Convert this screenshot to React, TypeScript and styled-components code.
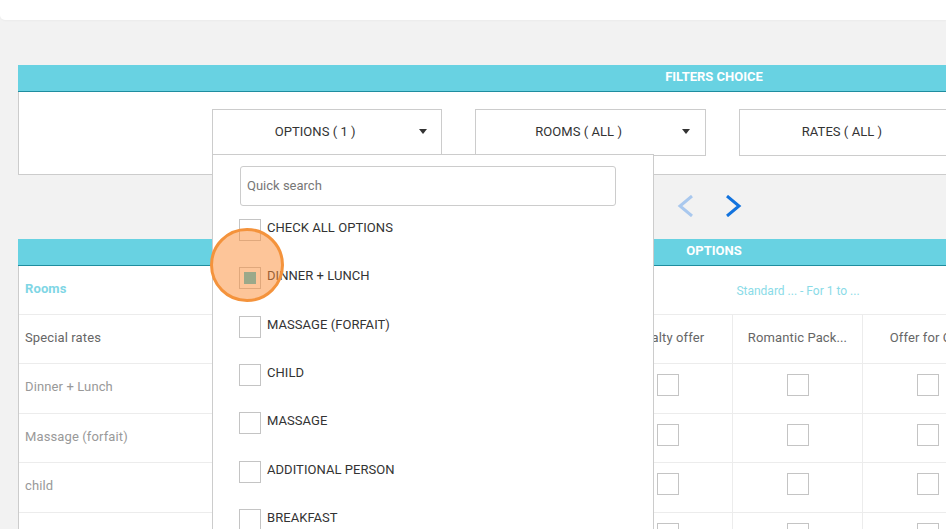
import React from 'react';
import styled, { createGlobalStyle } from 'styled-components';

const GlobalStyle = createGlobalStyle`
    html, body {
        margin: 0;
        height: 100%;
        overflow: hidden;
        background-color: #f2f2f2;
    }
    * {
        box-sizing: border-box;
    }
`;

const Page = styled.div`
    position: relative;
    width: 946px;
    height: 529px;
    overflow: hidden;
    background-color: #f2f2f2;
    font-family: Roboto, 'Liberation Sans', sans-serif;
    font-size: 13px;
    letter-spacing: 0.05px;
    color: #333;
`;

const TopBar = styled.div`
    height: 20px;
    background-color: #fff;
    border-bottom-left-radius: 5px;
    box-shadow: 0 1px 2px rgba(0, 0, 0, 0.03);
`;

const Content = styled.div`
    width: 1410px;
    padding: 45px 0 0 18px;
`;

const Panel = styled.section`
    background-color: #fff;
    border: 1px solid #ccc;
    border-top: 0;
`;

const PanelTitle = styled.div`
    height: 27px;
    margin: 0 -1px;
    line-height: 24px;
    text-align: center;
    font-size: 13px;
    font-weight: 700;
    letter-spacing: 0;
    color: #fff;
    background-color: #68d2e2;
    border-bottom: 1px solid #1f8d9f;
`;

const FilterRow = styled.div`
    display: flex;
    gap: 33px;
    height: 82px;
    padding: 17px 0 0 193px;
`;

const Dropdown = styled.div`
    position: relative;
    width: 230.4px;
    height: 47px;
`;

const DropdownButton = styled.div`
    display: flex;
    align-items: center;
    justify-content: center;
    height: 100%;
    padding: 0 24px 2px 0;
    background-color: #fff;
    border: 1px solid #ccc;
    color: #333;
`;

const Caret = styled.span`
    position: absolute;
    top: 20px;
    right: 15.5px;
    border-top: 5px solid #333;
    border-left: 4.5px solid transparent;
    border-right: 4.5px solid transparent;
`;

const Menu = styled.div`
    position: absolute;
    top: 45px;
    left: 0;
    z-index: 2;
    width: 442px;
    height: 400px;
    padding: 11px 0 0 26px;
    background-color: #fff;
    border: 1px solid #ccc;
`;

const Search = styled.input`
    display: block;
    width: 376px;
    height: 40px;
    margin: 0 0 13px 1px;
    padding: 0 6px 2px;
    border: 1px solid #ccc;
    border-radius: 3px;
    outline: none;
    font-family: inherit;
    font-size: 13px;
    &::placeholder {
        color: #777;
        opacity: 1;
    }
`;

const MenuRow = styled.div`
    display: flex;
    gap: 6px;
    height: 48.33px;
    line-height: 17px;
    color: #333;
`;

const Check = styled.span<{ $checked?: boolean }>`
    display: flex;
    align-items: center;
    justify-content: center;
    flex: none;
    width: 22px;
    height: 22px;
    background-color: #fff;
    border: 1px solid #c4c4c4;
    &::after {
        content: '';
        display: ${(props) => (props.$checked ? 'block' : 'none')};
        width: 12px;
        height: 12px;
        background-color: #3bc6e1;
    }
`;

const Pager = styled.div`
    display: flex;
    align-items: center;
    justify-content: center;
    gap: 31px;
    height: 64px;
    padding: 0 9px 2px 0;
`;

const Grid = styled.div`
    display: grid;
    grid-template-columns: 194px repeat(9, 130px) 1fr;
    grid-template-rows: 48.5px;
    grid-auto-rows: 49.5px;
`;

const Cell = styled.div<{ $span?: number }>`
    display: flex;
    align-items: center;
    justify-content: center;
    grid-column: span ${(props) => props.$span ?? 1};
    padding-bottom: 2px;
    border-bottom: 1px solid #ececec;
    border-right: 1px solid #ececec;
    letter-spacing: 0.12px;
    color: #666;
    white-space: nowrap;
    overflow: hidden;
`;

const RoomCell = styled(Cell)`
    padding: 2px 0 0;
    border-right: 0;
    font-size: 12px;
    letter-spacing: 0;
    color: #8adbe7;
`;

const CheckCell = styled(Cell)`
    align-items: flex-start;
    padding: 10px 0 0;
`;

const LabelCell = styled(Cell)<{ $tone?: string }>`
    justify-content: flex-start;
    padding: 0 0 3px 6px;
    border-right: 0;
    color: ${(props) => props.$tone ?? '#999'};
`;

const RoomsLabel = styled(LabelCell)`
    font-weight: 700;
    color: #7fd6e5;
`;

const Highlight = styled.div`
    position: absolute;
    top: 228px;
    left: 210px;
    z-index: 3;
    width: 74px;
    height: 74px;
    border-radius: 50%;
    background-color: rgba(251, 140, 51, 0.5);
    border: 3px solid #f4933c;
`;

const options = [
    'CHECK ALL OPTIONS',
    'DINNER + LUNCH',
    'MASSAGE (FORFAIT)',
    'CHILD',
    'MASSAGE',
    'ADDITIONAL PERSON',
    'BREAKFAST',
];

const rateHeaders = [
    'Early booking',
    'Last minute',
    'Long stay',
    'Loyalty offer',
    'Romantic Pack...',
    'Offer for Cl...',
    'Weekend offer',
    'Family offer',
    'Spa offer',
];

const rowLabels = ['Dinner + Lunch', 'Massage (forfait)', 'child', 'massage'];

function Chevron({ color, flip }: { color: string; flip?: boolean }) {
    return (
        <svg width="17" height="22" viewBox="0 0 17 22" style={flip ? { transform: 'scaleX(-1)' } : undefined}>
            <path d="M15 1 L3 11 L15 21" fill="none" stroke={color} strokeWidth="3" />
        </svg>
    );
}

export default function App() {
    return (
        <Page>
            <GlobalStyle />
            <TopBar />
            <Content>
                <Panel>
                    <PanelTitle>FILTERS CHOICE</PanelTitle>
                    <FilterRow>
                        <Dropdown>
                            <DropdownButton>OPTIONS ( 1 )</DropdownButton>
                            <Caret />
                            <Menu>
                                <Search placeholder="Quick search" />
                                {options.map((option, index) => (
                                    <MenuRow key={option}>
                                        <Check $checked={index === 1} />
                                        {option}
                                    </MenuRow>
                                ))}
                            </Menu>
                        </Dropdown>
                        <Dropdown>
                            <DropdownButton>ROOMS ( ALL )</DropdownButton>
                            <Caret />
                        </Dropdown>
                        <Dropdown>
                            <DropdownButton>RATES ( ALL )</DropdownButton>
                            <Caret />
                        </Dropdown>
                    </FilterRow>
                </Panel>
                <Pager>
                    <Chevron color="#a9c8ee" />
                    <Chevron color="#1273de" flip />
                </Pager>
                <Panel>
                    <PanelTitle>OPTIONS</PanelTitle>
                    <Grid>
                        <RoomsLabel>Rooms</RoomsLabel>
                        <RoomCell $span={9}>Standard ... - For 1 to ...</RoomCell>
                        <Cell />
                        <LabelCell $tone="#666">Special rates</LabelCell>
                        {rateHeaders.map((header) => (
                            <Cell key={header}>{header}</Cell>
                        ))}
                        <Cell />
                        {rowLabels.map((label) => (
                            <React.Fragment key={label}>
                                <LabelCell>{label}</LabelCell>
                                {rateHeaders.map((header) => (
                                    <CheckCell key={header}>
                                        <Check />
                                    </CheckCell>
                                ))}
                                <Cell />
                            </React.Fragment>
                        ))}
                    </Grid>
                </Panel>
            </Content>
            <Highlight />
        </Page>
    );
}
